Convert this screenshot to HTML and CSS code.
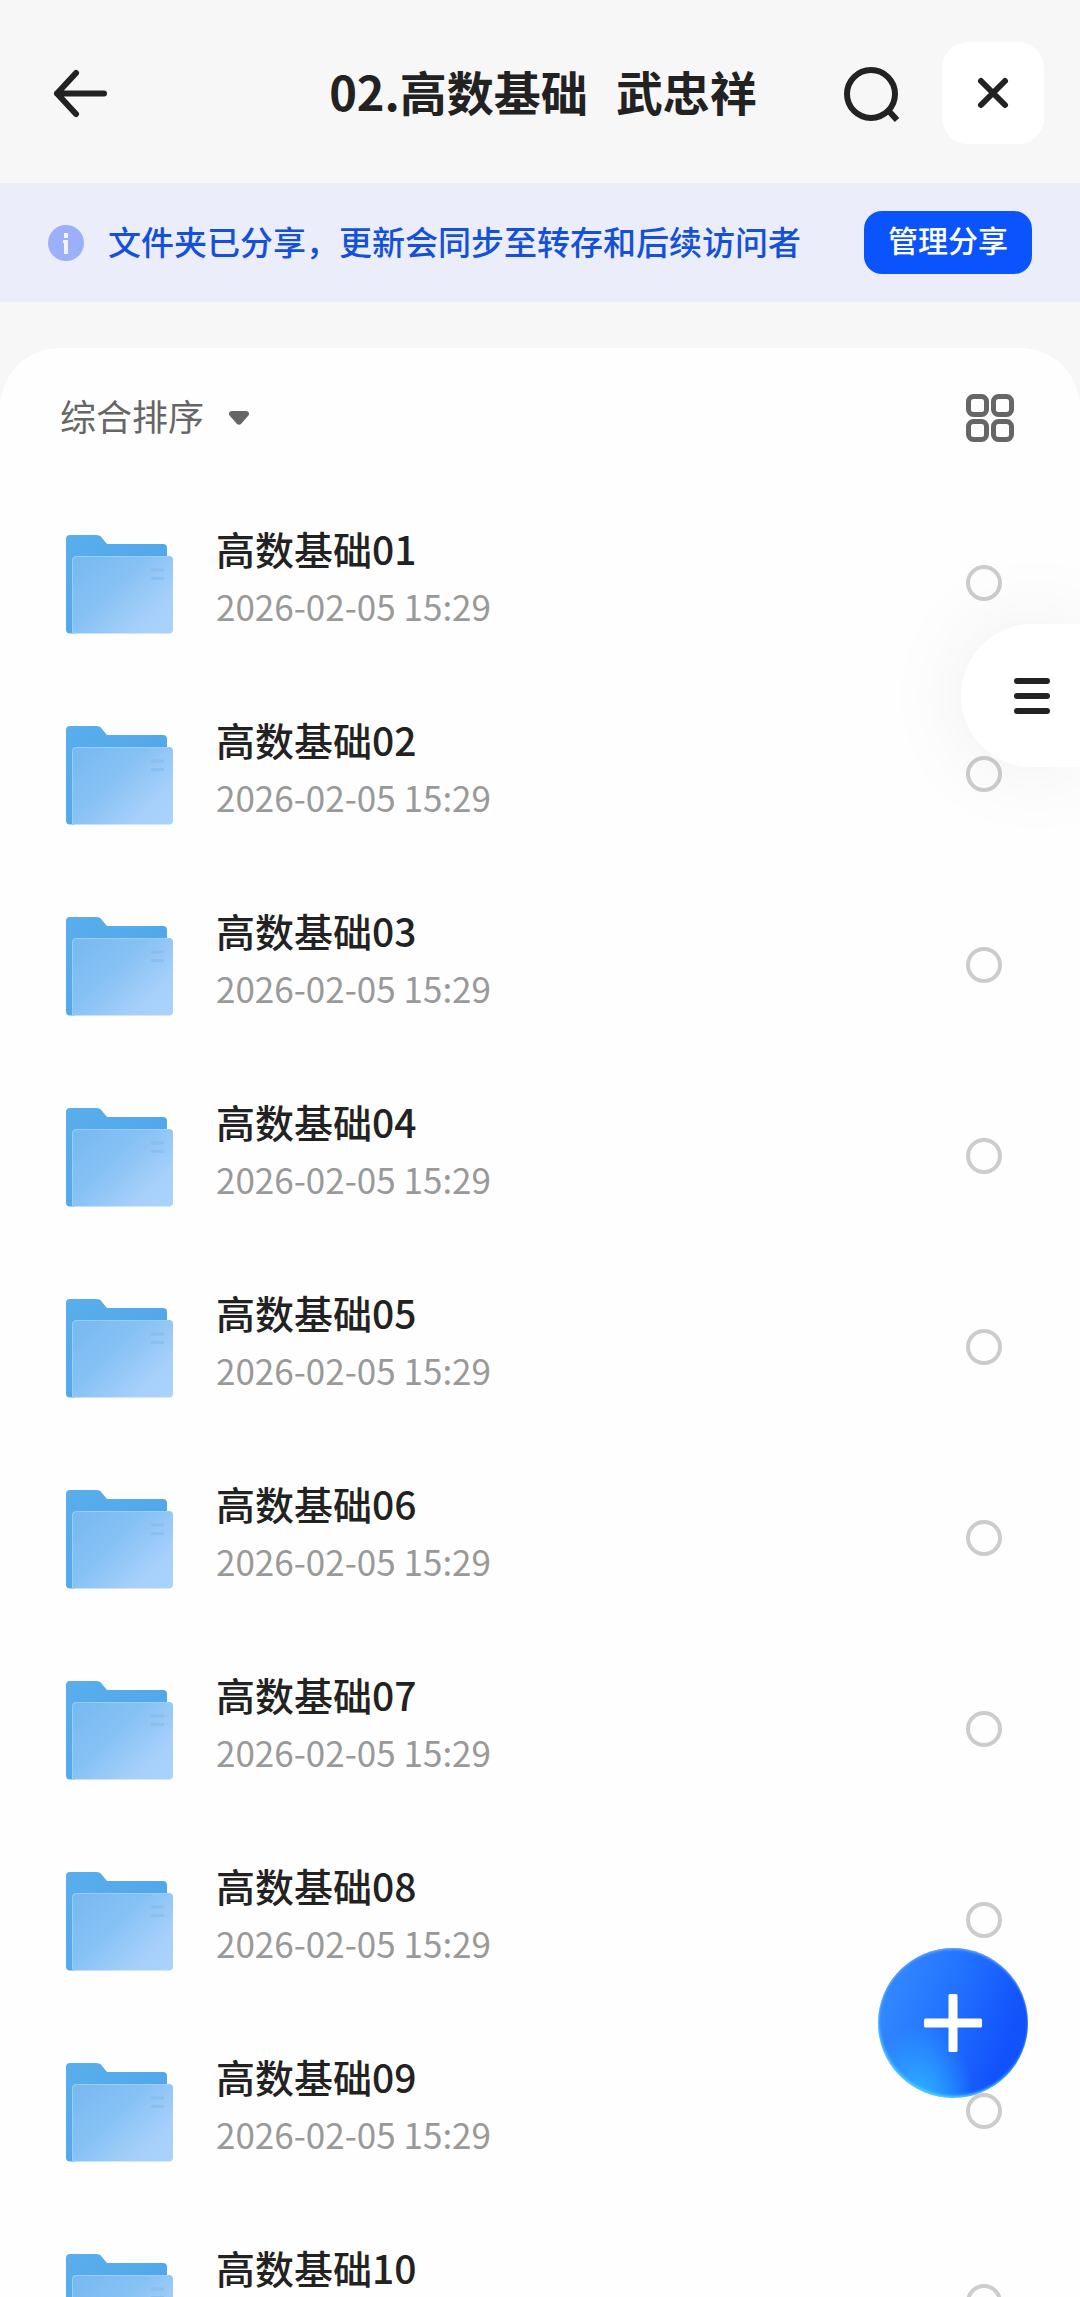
FILE: index.html
```
<!DOCTYPE html>
<html lang="zh-CN">
<head>
  <meta charset="UTF-8">
  <meta name="viewport" content="width=device-width,initial-scale=1.0">
  <title>02.高数基础 武忠祥</title>
  <link rel="stylesheet" href="styles.css">
</head>
<body>
  <!-- shared icon shapes -->
  <svg class="sprite" aria-hidden="true">
    <defs>
      <linearGradient id="folderBack" x1="0" y1="0" x2="1" y2="1">
        <stop offset="0" stop-color="#5aaeec"/>
        <stop offset="1" stop-color="#4ba3e8"/>
      </linearGradient>
      <linearGradient id="folderFront" x1="0" y1="0.1" x2="1" y2="0.9">
        <stop offset="0" stop-color="#78b9f1"/>
        <stop offset="0.4" stop-color="#86c1f4"/>
        <stop offset="0.8" stop-color="#a6d0fa"/>
        <stop offset="1" stop-color="#a9d3fa"/>
      </linearGradient>
    </defs>
    <symbol id="folder" viewBox="0 0 120 120">
      <path fill="url(#folderBack)" d="M10 12h26c3 0 5 1 6 3l5 6h56a4 4 0 0 1 4 4V60L14 110.500h-4a4 4 0 0 1-4-4V16a4 4 0 0 1 4-4z"/>
      <path fill="url(#folderFront)" d="M16 33h93a4 4 0 0 1 4 4v69.500a4 4 0 0 1-4 4H12V37a4 4 0 0 1 4-4z"/>
      <path fill="none" stroke="#9bcef8" stroke-width="1" d="M12.500 110V37.500a4 4 0 0 1 4-4h92"/>
      <path stroke="#7fb8ea" stroke-width="3" opacity="0.5" d="M91 47h13M91 55.500h13"/>
    </symbol>
  </svg>

  <div class="app">
    <header class="topbar">
      <button class="icon-btn back" type="button" aria-label="返回">
        <svg width="66" height="60" viewBox="0 0 66 60">
          <path class="line" d="M34 10L15 30.500l19 20.500M15 30.500h47"/>
        </svg>
      </button>
      <h1 class="title"><span>02.高数基础 </span> <span>武忠祥</span></h1>
      <div class="actions">
        <button class="icon-btn" type="button" aria-label="搜索">
          <svg width="60" height="60" viewBox="0 0 60 60">
            <circle class="line" cx="29" cy="31" r="24"/>
            <path class="line square" d="M45 46l10 11"/>
          </svg>
        </button>
        <button class="icon-btn close" type="button" aria-label="关闭">
          <svg width="36" height="36" viewBox="0 0 36 36">
            <path class="line" d="M6 6l24 24M30 6L6 30"/>
          </svg>
        </button>
      </div>
    </header>

    <section class="notice">
      <svg class="notice-icon" width="36" height="36" viewBox="0 0 36 36">
        <circle cx="18" cy="18" r="18" fill="#9bb0f9"/>
        <path fill="#f2f5ff" d="M16 8h4v5h-4zM15 15h5v14h-4V18h-1z"/>
      </svg>
      <p class="notice-text">文件夹已分享，更新会同步至转存和后续访问者</p>
      <button class="manage" type="button">管理分享</button>
    </section>

    <main class="panel">
      <div class="toolbar">
        <div class="sort">
          <select class="sort-select" aria-label="排序方式">
            <option>综合排序</option>
          </select>
          <svg width="20" height="14" viewBox="0 0 20 14">
            <path fill="#666" d="M3 0h14c3 0 4 3 2 5l-7 8c-1 1-3 1-4 0L1 5c-2-2-1-5 2-5z"/>
          </svg>
        </div>
        <button class="icon-btn" type="button" aria-label="网格视图">
          <svg width="48" height="48" viewBox="0 0 48 48" fill="none" stroke="#666" stroke-width="5">
            <rect x="2.500" y="2.500" width="18" height="18" rx="5"/>
            <rect x="27.500" y="2.500" width="18" height="18" rx="5"/>
            <rect x="2.500" y="27.500" width="18" height="18" rx="5"/>
            <rect x="27.500" y="27.500" width="18" height="18" rx="5"/>
          </svg>
        </button>
      </div>
      <ul class="files" id="files"></ul>
    </main>

    <button class="side-menu" type="button" aria-label="菜单">
      <svg width="36" height="36" viewBox="0 0 36 36">
        <path class="line" d="M3 3h30M3 18h30M3 33h30"/>
      </svg>
    </button>

    <button class="fab" type="button" aria-label="添加">
      <svg width="58" height="58" viewBox="0 0 58 58">
        <path fill="#fff" d="M26 0h6q1.500 0 1.500 1.500v23h23q1.500 0 1.500 1.500v6q0 1.500-1.500 1.500h-23v23q0 1.500-1.500 1.500h-6q-1.500 0-1.500-1.500v-23h-23Q0 33.500 0 32v-6q0-1.500 1.500-1.500h23v-23Q24.500 0 26 0z"/>
      </svg>
    </button>
  </div>

  <script src="script.js"></script>
</body>
</html>
```
FILE: styles.css
```
* { margin:0; padding:0; box-sizing:border-box; }
body {
  font-family:"Noto Sans CJK SC", sans-serif;
  background:#f7f7f8;
  color:#222;
}
button, select { font-family:inherit; border:0; background:none; cursor:pointer; }
svg { display:block; flex:none; }
.sprite { position:absolute; width:0; height:0; }
.line {
  fill:none; stroke:#222; stroke-width:6;
  stroke-linecap:round; stroke-linejoin:round;
}
.line.square { stroke-linecap:butt; }

.app {
  position:relative;
  display:flex; flex-direction:column;
  height:100vh; overflow:hidden;
}

/* Top bar */
.topbar {
  display:grid; grid-template-columns:1fr auto 1fr; align-items:center;
  padding:42px 36px 39px 42px;
}
.icon-btn { display:flex; align-items:center; justify-content:center; }
.back { justify-self:start; }
.title {
  display:flex; gap:28px;
  padding-bottom:4px;
  font-size:47px; line-height:64px; font-weight:700;
}
.actions { display:flex; align-items:center; justify-self:end; gap:40px; }
.close {
  width:102px; height:102px;
  background:#fff; border-radius:26px;
}

/* Share notice */
.notice {
  display:flex; align-items:center;
  padding:28px 48px;
  background:#ebedfb;
}
.notice-text {
  flex:1;
  margin-left:24px;
  padding-bottom:4px;
  font-size:33px; line-height:48px; font-weight:500;
  color:#1550d8;
}
.manage {
  padding:6px 24px 13px;
  border-radius:18px;
  background:#0b53fd; color:#fff;
  font-size:30px; line-height:44px; font-weight:500;
}

/* File list panel */
.panel {
  flex:1; min-height:0;
  display:flex; flex-direction:column;
  margin-top:46px;
  background:#fefefe;
  border-radius:60px 60px 0 0;
}
.toolbar {
  display:flex; align-items:center; justify-content:space-between;
  padding:39px 66px 38px 60px;
}
.sort { display:flex; align-items:center; gap:24px; }
.sort-select {
  appearance:none;
  padding-bottom:6px;
  font-size:36px; line-height:56px; color:#666;
}
.files {
  flex:1; min-height:0;
  overflow-y:auto; scrollbar-width:none;
  list-style:none;
}
.file {
  display:flex; align-items:center;
  height:191px;
  padding:0 78px 0 60px;
  cursor:pointer;
}
.file-icon { width:120px; height:120px; }
.file-info { flex:1; margin-left:36px; padding-bottom:14px; }
.file-name, .file-date { display:block; }
.file-name { font-size:39px; line-height:60px; font-weight:500; }
.file-date { font-size:35px; line-height:56px; color:#999; }
.file-check {
  appearance:none;
  width:36px; height:36px;
  border:4px solid #ccc; border-radius:50%;
}
.file-check:checked { border-color:#0b53fd; background:#0b53fd; }

/* Floating controls */
.side-menu {
  position:absolute; top:624px; right:0;
  display:flex; align-items:center; justify-content:flex-end;
  width:119px; height:143px;
  padding-right:30px;
  background:#fff;
  border-radius:72px 0 0 72px;
  box-shadow:0 0 90px rgba(0,0,0,0.07);
}
.fab {
  position:absolute; right:52px; bottom:199px;
  display:flex; align-items:center; justify-content:center;
  width:150px; height:150px;
  border-radius:50%;
  background:
    radial-gradient(ellipse at 28% 104%, #2fb6ff 0%, rgba(47,166,255,0) 36%),
    linear-gradient(110deg, #3489ff 10%, #2272ff 45%, #1252fb 80%);
  box-shadow:inset 1px -2px 3px #4fd0ff, inset 0 2px 2px #5a9cf5;
}
```
FILE: script.js
```
const list = document.getElementById('files');
const total = 10;

for (let i = 1; i <= total; i++) {
  const num = String(i).padStart(2, '0');
  const item = document.createElement('li');
  item.innerHTML = `
    <label class="file">
      <svg class="file-icon"><use href="#folder"/></svg>
      <span class="file-info">
        <span class="file-name">高数基础${num}</span>
        <time class="file-date">2026-02-05 15:29</time>
      </span>
      <input class="file-check" type="checkbox">
    </label>`;
  list.appendChild(item);
}
```
